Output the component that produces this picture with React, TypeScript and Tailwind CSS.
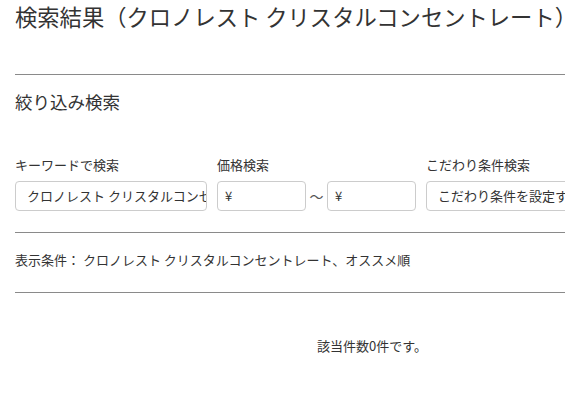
import React from 'react';

const keyword = 'クロノレスト クリスタルコンセントレート';

const Field: React.FC<{ value: string; className?: string }> = ({ value, className }) => (
    <div
        className={`flex h-[30px] items-center overflow-hidden whitespace-nowrap rounded-[4px] border border-[#cccccc] bg-white text-[13px] text-[#333] ${className ?? ''}`}
    >
        {value}
    </div>
);

export default function App() {
    return (
        <div
            className="min-w-[744px] px-[15px] text-[#333] bg-white"
            style={{ fontFamily: '"Noto Sans CJK JP", "Noto Sans", sans-serif' }}
        >
            <h1 className="text-[22.3px] leading-[32px] whitespace-nowrap">検索結果（{keyword}）</h1>

            <div className="mt-[42px] border-t border-[#8a8a8a]" />

            <h2 className="mt-[14px] text-[17.5px] leading-[26px]">絞り込み検索</h2>

            {/* filters */}
            <div className="mt-[41px] flex gap-[10px]">
                <div className="flex w-[192px] shrink-0 flex-col gap-[7px]">
                    <label className="text-[13px] leading-[18px]">キーワードで検索</label>
                    <Field value={keyword} className="w-full pl-[11px]" />
                </div>
                <div className="flex w-[199px] shrink-0 flex-col gap-[7px]">
                    <label className="text-[13px] leading-[18px]">価格検索</label>
                    <div className="flex items-center">
                        <Field value="¥" className="w-[89px] pl-[7px]" />
                        <span className="w-[21px] text-center text-[14px] text-[#555]">〜</span>
                        <Field value="¥" className="w-[89px] pl-[7px]" />
                    </div>
                </div>
                <div className="flex w-[300px] shrink-0 flex-col gap-[7px]">
                    <label className="text-[13px] leading-[18px]">こだわり条件検索</label>
                    <Field value="こだわり条件を設定する" className="w-full pl-[11px]" />
                </div>
            </div>

            <div className="mt-[21px] border-t border-[#8a8a8a]" />

            <p className="mt-[17px] text-[13px] leading-[20px]">
                表示条件： {keyword}、オススメ順
            </p>

            <div className="mt-[22px] border-t border-[#8a8a8a]" />

            <p className="mt-[43px] text-center text-[13px] leading-[20px]">該当件数0件です。</p>
            <div className="h-[60px]" />
        </div>
    );
}
